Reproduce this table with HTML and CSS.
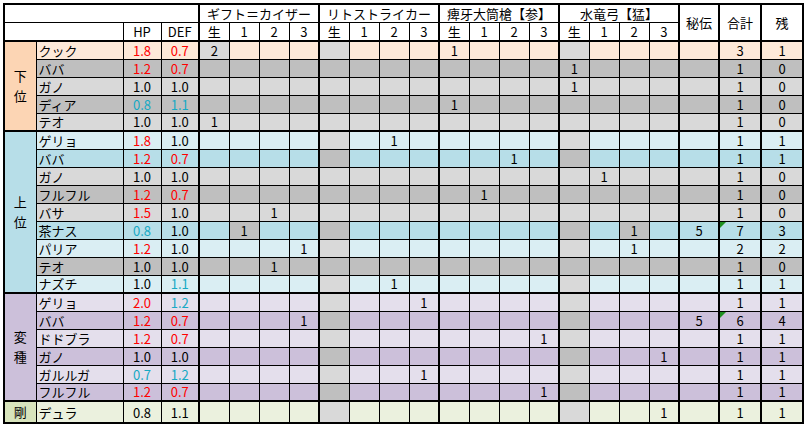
FILE: index.html
```html
<!DOCTYPE html>
<html lang="ja">
<head>
<meta charset="utf-8">
<title>表</title>
<link rel="stylesheet" href="styles.css">
</head>
<body>
<table class="sheet">
  <colgroup class="cg"><col class="c-grp"><col class="c-nm"><col class="c-st"><col class="c-st"></colgroup>
  <colgroup class="cg"><col class="c-s"><col class="c-s"><col class="c-s"><col class="c-s"></colgroup>
  <colgroup class="cg"><col class="c-s"><col class="c-s"><col class="c-s"><col class="c-s"></colgroup>
  <colgroup class="cg"><col class="c-s"><col class="c-s"><col class="c-s"><col class="c-s"></colgroup>
  <colgroup class="cg"><col class="c-s"><col class="c-s"><col class="c-s"><col class="c-s"></colgroup>
  <colgroup class="cg"><col class="c-hi"></colgroup>
  <colgroup class="cg"><col class="c-tot"></colgroup>
  <colgroup class="cg"><col class="c-tot"></colgroup>
  <thead>
    <tr class="h1">
      <th colspan="4"></th>
      <th colspan="4">ギフト＝カイザー</th>
      <th colspan="4">リトストライカー</th>
      <th colspan="4">痺牙大筒槍【参】</th>
      <th colspan="4">水竜弓【猛】</th>
      <th rowspan="2">秘伝</th>
      <th rowspan="2">合計</th>
      <th rowspan="2">残</th>
    </tr>
    <tr class="h2">
      <th colspan="2"></th><th>HP</th><th>DEF</th>
      <th>生</th><th>1</th><th>2</th><th>3</th>
      <th>生</th><th>1</th><th>2</th><th>3</th>
      <th>生</th><th>1</th><th>2</th><th>3</th>
      <th>生</th><th>1</th><th>2</th><th>3</th>
    </tr>
  </thead>
  <tbody class="grp-low">
    <tr class="pk"><td class="grp" rowspan="5">下<br>位</td><td class="nm">クック</td><td class="r">1.8</td><td class="r">0.7</td>
      <td class="gc">2</td><td></td><td></td><td></td>
      <td class="g"></td><td></td><td></td><td></td>
      <td>1</td><td></td><td></td><td></td>
      <td class="g"></td><td></td><td></td><td></td>
      <td></td><td>3</td><td>1</td></tr>
    <tr class="dg"><td class="nm">ババ</td><td class="r">1.2</td><td class="r">0.7</td>
      <td></td><td></td><td></td><td></td>
      <td class="g"></td><td></td><td></td><td></td>
      <td></td><td></td><td></td><td></td>
      <td class="g">1</td><td></td><td></td><td></td>
      <td></td><td>1</td><td>0</td></tr>
    <tr class="lg"><td class="nm">ガノ</td><td>1.0</td><td>1.0</td>
      <td></td><td></td><td></td><td></td>
      <td class="g"></td><td></td><td></td><td></td>
      <td></td><td></td><td></td><td></td>
      <td class="g">1</td><td></td><td></td><td></td>
      <td></td><td>1</td><td>0</td></tr>
    <tr class="dg"><td class="nm">ディア</td><td class="c">0.8</td><td class="c">1.1</td>
      <td></td><td></td><td></td><td></td>
      <td class="g"></td><td></td><td></td><td></td>
      <td>1</td><td></td><td></td><td></td>
      <td class="g"></td><td></td><td></td><td></td>
      <td></td><td>1</td><td>0</td></tr>
    <tr class="lg"><td class="nm">テオ</td><td>1.0</td><td>1.0</td>
      <td>1</td><td></td><td></td><td></td>
      <td class="g"></td><td></td><td></td><td></td>
      <td></td><td></td><td></td><td></td>
      <td class="g"></td><td></td><td></td><td></td>
      <td></td><td>1</td><td>0</td></tr>
  </tbody>
  <tbody class="grp-high">
    <tr class="lb"><td class="grp" rowspan="9">上<br>位</td><td class="nm">ゲリョ</td><td class="r">1.8</td><td>1.0</td>
      <td></td><td></td><td></td><td></td>
      <td class="g"></td><td></td><td>1</td><td></td>
      <td></td><td></td><td></td><td></td>
      <td class="g"></td><td></td><td></td><td></td>
      <td></td><td>1</td><td>1</td></tr>
    <tr class="bl"><td class="nm">ババ</td><td class="r">1.2</td><td class="r">0.7</td>
      <td></td><td></td><td></td><td></td>
      <td class="g"></td><td></td><td></td><td></td>
      <td></td><td></td><td>1</td><td></td>
      <td class="g"></td><td></td><td></td><td></td>
      <td></td><td>1</td><td>1</td></tr>
    <tr class="lg"><td class="nm">ガノ</td><td>1.0</td><td>1.0</td>
      <td></td><td></td><td></td><td></td>
      <td class="g"></td><td></td><td></td><td></td>
      <td></td><td></td><td></td><td></td>
      <td class="g"></td><td>1</td><td></td><td></td>
      <td></td><td>1</td><td>0</td></tr>
    <tr class="dg"><td class="nm">フルフル</td><td class="r">1.2</td><td class="r">0.7</td>
      <td></td><td></td><td></td><td></td>
      <td class="g"></td><td></td><td></td><td></td>
      <td></td><td>1</td><td></td><td></td>
      <td class="g"></td><td></td><td></td><td></td>
      <td></td><td>1</td><td>0</td></tr>
    <tr class="lg"><td class="nm">バサ</td><td class="r">1.5</td><td>1.0</td>
      <td></td><td></td><td>1</td><td></td>
      <td class="g"></td><td></td><td></td><td></td>
      <td></td><td></td><td></td><td></td>
      <td class="g"></td><td></td><td></td><td></td>
      <td></td><td>1</td><td>0</td></tr>
    <tr class="bl"><td class="nm">茶ナス</td><td class="c">0.8</td><td>1.0</td>
      <td></td><td class="x">1</td><td></td><td></td>
      <td class="g"></td><td></td><td></td><td></td>
      <td></td><td></td><td></td><td></td>
      <td class="g"></td><td></td><td class="x">1</td><td></td>
      <td>5</td><td class="tri">7</td><td>3</td></tr>
    <tr class="lb"><td class="nm">パリア</td><td class="r">1.2</td><td>1.0</td>
      <td></td><td></td><td></td><td>1</td>
      <td class="g"></td><td></td><td></td><td></td>
      <td></td><td></td><td></td><td></td>
      <td class="g"></td><td></td><td>1</td><td></td>
      <td></td><td>2</td><td>2</td></tr>
    <tr class="dg"><td class="nm">テオ</td><td>1.0</td><td>1.0</td>
      <td></td><td></td><td>1</td><td></td>
      <td class="g"></td><td></td><td></td><td></td>
      <td></td><td></td><td></td><td></td>
      <td class="g"></td><td></td><td></td><td></td>
      <td></td><td>1</td><td>0</td></tr>
    <tr class="lb"><td class="nm">ナズチ</td><td>1.0</td><td class="c">1.1</td>
      <td></td><td></td><td></td><td></td>
      <td class="g"></td><td></td><td>1</td><td></td>
      <td></td><td></td><td></td><td></td>
      <td class="g"></td><td></td><td></td><td></td>
      <td></td><td>1</td><td>1</td></tr>
  </tbody>
  <tbody class="grp-var">
    <tr class="lp"><td class="grp" rowspan="6">変<br>種</td><td class="nm">ゲリョ</td><td class="r">2.0</td><td class="c">1.2</td>
      <td></td><td></td><td></td><td></td>
      <td class="g"></td><td></td><td></td><td>1</td>
      <td></td><td></td><td></td><td></td>
      <td class="g"></td><td></td><td></td><td></td>
      <td></td><td>1</td><td>1</td></tr>
    <tr class="pp"><td class="nm">ババ</td><td class="r">1.2</td><td class="r">0.7</td>
      <td></td><td></td><td></td><td>1</td>
      <td class="g"></td><td></td><td></td><td></td>
      <td></td><td></td><td></td><td></td>
      <td class="g"></td><td></td><td></td><td></td>
      <td>5</td><td class="tri">6</td><td>4</td></tr>
    <tr class="lp"><td class="nm">ドドブラ</td><td class="r">1.2</td><td class="r">0.7</td>
      <td></td><td></td><td></td><td></td>
      <td class="g"></td><td></td><td></td><td></td>
      <td></td><td></td><td></td><td>1</td>
      <td class="g"></td><td></td><td></td><td></td>
      <td></td><td>1</td><td>1</td></tr>
    <tr class="pp"><td class="nm">ガノ</td><td>1.0</td><td>1.0</td>
      <td></td><td></td><td></td><td></td>
      <td class="g"></td><td></td><td></td><td></td>
      <td></td><td></td><td></td><td></td>
      <td class="g"></td><td></td><td></td><td>1</td>
      <td></td><td>1</td><td>1</td></tr>
    <tr class="lp"><td class="nm">ガルルガ</td><td class="c">0.7</td><td class="c">1.2</td>
      <td></td><td></td><td></td><td></td>
      <td class="g"></td><td></td><td></td><td>1</td>
      <td></td><td></td><td></td><td></td>
      <td class="g"></td><td></td><td></td><td></td>
      <td></td><td>1</td><td>1</td></tr>
    <tr class="pp"><td class="nm">フルフル</td><td class="r">1.2</td><td class="r">0.7</td>
      <td></td><td></td><td></td><td></td>
      <td class="g"></td><td></td><td></td><td></td>
      <td></td><td></td><td></td><td>1</td>
      <td class="g"></td><td></td><td></td><td></td>
      <td></td><td>1</td><td>1</td></tr>
  </tbody>
  <tbody class="grp-g">
    <tr class="gn"><td class="grp">剛</td><td class="nm">デュラ</td><td>0.8</td><td>1.1</td>
      <td></td><td></td><td></td><td></td>
      <td class="g"></td><td></td><td></td><td></td>
      <td></td><td></td><td></td><td></td>
      <td class="g"></td><td></td><td></td><td>1</td>
      <td></td><td>1</td><td>1</td></tr>
  </tbody>
</table>
</body>
</html>
```
FILE: styles.css
```css
html, body {
  margin: 0;
  padding: 0;
  background: #ffffff;
}
body {
  padding: 3px 0 0 3px;
  font-family: "Noto Sans CJK JP", "Noto Sans", sans-serif;
  font-size: 13px;
  color: #000;
}
.sheet {
  border-collapse: collapse;
  table-layout: fixed;
  width: 800px;
  border: 2px solid #000;
}
.c-grp { width: 32px; }
.c-nm { width: 87px; }
.c-st { width: 38px; }
.c-s { width: 30px; }
.c-hi { width: 40px; }
.c-tot { width: 42px; }
.cg { border-right: 2px solid #000; }
thead { border-bottom: 2px solid #000; }
tbody { border-top: 2px solid #000; }

th, td {
  border: 1px solid #000;
  padding: 0;
  text-align: center;
  vertical-align: middle;
  line-height: 15px;
  font-weight: normal;
  white-space: nowrap;
  overflow: hidden;
}
th { background: #fff; }
.h1 { height: 18px; }
.h2 { height: 19px; }
tbody tr { height: 18px; }
.grp-g tr { height: 21px; }

td.nm { text-align: left; padding-left: 2px; }
td.grp { line-height: 20px; }

.r { color: #ff0000; }
.c { color: #17a9c4; }

.pk td { background: #fde9d9; }
.dg td { background: #bfbfbf; }
.lg td { background: #d9d9d9; }
.lb td { background: #daeef3; }
.bl td { background: #b7dee8; }
.lp td { background: #e4dfec; }
.pp td { background: #ccc0da; }
.gn td { background: #ebf1de; }

.grp-low td.grp { background: #fcd5b4; }
.grp-high td.grp { background: #b7dee8; }
.grp-var td.grp { background: #ccc0da; }
.grp-g td.grp { background: #d8e4bc; }

.pk td.g, .lg td.g, .lb td.g, .lp td.g, .gn td.g { background: #d9d9d9; }
.dg td.g, .bl td.g, .pp td.g { background: #bfbfbf; }
td.gc { background: #d9d9d9; }
td.x { background: #bfbfbf; }

td.tri { position: relative; overflow: visible; }
td.tri::before {
  content: "";
  position: absolute;
  top: 0;
  left: 0;
  border-top: 6px solid #1f8f1f;
  border-right: 6px solid transparent;
}
```
